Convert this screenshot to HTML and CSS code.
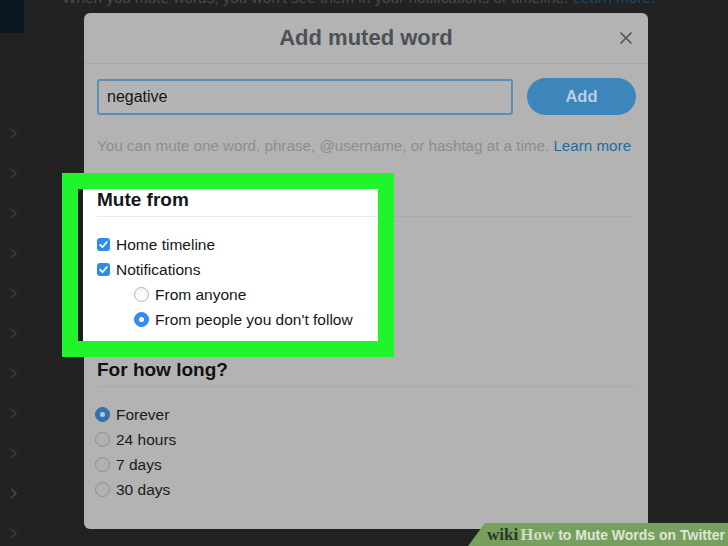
FILE: index.html
```html
<!DOCTYPE html>
<html>
<head>
<meta charset="utf-8">
<link rel="stylesheet" href="styles.css">
</head>
<body>
<div class="page">
  <aside class="sidebar">
    <div class="brand"></div>
    <ul class="nav">
      <li><svg class="chev" width="7" height="11" viewBox="0 0 7 11"><polyline points="1,1 6,5.5 1,10"/></svg></li>
      <li><svg class="chev" width="7" height="11" viewBox="0 0 7 11"><polyline points="1,1 6,5.5 1,10"/></svg></li>
      <li><svg class="chev" width="7" height="11" viewBox="0 0 7 11"><polyline points="1,1 6,5.5 1,10"/></svg></li>
      <li><svg class="chev" width="7" height="11" viewBox="0 0 7 11"><polyline points="1,1 6,5.5 1,10"/></svg></li>
      <li><svg class="chev" width="7" height="11" viewBox="0 0 7 11"><polyline points="1,1 6,5.5 1,10"/></svg></li>
      <li><svg class="chev" width="7" height="11" viewBox="0 0 7 11"><polyline points="1,1 6,5.5 1,10"/></svg></li>
      <li><svg class="chev" width="7" height="11" viewBox="0 0 7 11"><polyline points="1,1 6,5.5 1,10"/></svg></li>
      <li><svg class="chev" width="7" height="11" viewBox="0 0 7 11"><polyline points="1,1 6,5.5 1,10"/></svg></li>
      <li><svg class="chev" width="7" height="11" viewBox="0 0 7 11"><polyline points="1,1 6,5.5 1,10"/></svg></li>
      <li class="hl"><svg class="chev" width="7" height="11" viewBox="0 0 7 11"><polyline points="1,1 6,5.5 1,10"/></svg></li>
      <li><svg class="chev" width="7" height="11" viewBox="0 0 7 11"><polyline points="1,1 6,5.5 1,10"/></svg></li>
    </ul>
  </aside>
  <main class="main">
    <p class="intro">When you mute words, you won't see them in your notifications or timeline. <span class="intro-link">Learn more.</span></p>
  </main>
</div>

<div class="modal">
  <header class="modal-head">
    <span></span>
    <h2 class="modal-title">Add muted word</h2>
    <svg class="close" width="14" height="14" viewBox="0 0 14 14"><path d="M1.5 1.5 L12.5 12.5 M12.5 1.5 L1.5 12.5"/></svg>
  </header>
  <div class="modal-body">
    <div class="entry">
      <div class="field">negative</div>
      <button class="add">Add</button>
    </div>
    <p class="help">You can mute one word, phrase, @username, or hashtag at a time. <span class="link">Learn more</span></p>

    <section class="mute">
      <h3 class="sec-title light">Mute from</h3>
      <ul class="opts">
        <li class="opt"><span class="check"><svg width="13" height="13" viewBox="0 0 13 13"><polyline points="3.2,6.8 5.5,9.2 9.8,4"/></svg></span>Home timeline</li>
        <li class="opt"><span class="check"><svg width="13" height="13" viewBox="0 0 13 13"><polyline points="3.2,6.8 5.5,9.2 9.8,4"/></svg></span>Notifications</li>
        <li class="opt sub"><span class="radio"></span>From anyone</li>
        <li class="opt sub"><span class="radio on"></span>From people you don't follow</li>
      </ul>
    </section>

    <section class="howlong">
      <h3 class="sec-title">For how long?</h3>
      <ul class="opts dim">
        <li class="opt"><span class="radio on"></span>Forever</li>
        <li class="opt"><span class="radio"></span>24 hours</li>
        <li class="opt"><span class="radio"></span>7 days</li>
        <li class="opt"><span class="radio"></span>30 days</li>
      </ul>
    </section>
  </div>
</div>

<div class="watermark"><span class="wm-wiki">wiki</span><span class="wm-how">How</span><span class="wm-text">to Mute Words on Twitter</span></div>
</body>
</html>
```
FILE: styles.css
```css
* { box-sizing: border-box; }
html, body { margin: 0; padding: 0; }
body {
  width: 728px;
  height: 546px;
  overflow: hidden;
  background: #222222;
  font-family: "Liberation Sans", Arial, sans-serif;
  position: relative;
}
ul { list-style: none; margin: 0; padding: 0; }
h2, h3, p { margin: 0; }

.page { display: flex; height: 546px; }
.sidebar { width: 34px; display: flex; flex-direction: column; }
.brand { width: 24px; height: 33px; background: #0a1723; flex: none; }
.nav { margin-top: 80px; }
.nav li { height: 40px; display: flex; align-items: center; padding-left: 10px; }
.chev polyline { fill: none; stroke: #3b3b3b; stroke-width: 1.6; }
.nav li.hl .chev polyline { stroke: #4a4a4a; }

.main { flex: 1; padding-left: 28px; }
.intro {
  margin-top: -11px;
  font-size: 15.3px;
  line-height: 18px;
  color: #4a4a4a;
  white-space: nowrap;
}
.intro-link { color: #1c4566; }

.modal {
  position: absolute;
  left: 84px;
  top: 13px;
  width: 564px;
  height: 516px;
  background: #b3b3b3;
  border-radius: 6px;
}
.modal-head {
  height: 51px;
  border-bottom: 1px solid #a6a8aa;
  display: grid;
  grid-template-columns: 1fr auto 1fr;
  align-items: center;
}
.modal-title {
  font-size: 22px;
  font-weight: bold;
  color: #4b5157;
  line-height: 26px;
}
.close { justify-self: end; margin-right: 15px; }
.close path { stroke: #4e5459; stroke-width: 1.6; fill: none; }

.modal-body { padding: 14px 12px 0 13px; }
.entry { display: flex; align-items: center; gap: 14px; }
.field {
  flex: 1;
  height: 36px;
  border: 2px solid #5c8db3;
  border-radius: 3px;
  background: #b4b4b4;
  font-size: 16px;
  line-height: 32px;
  padding-left: 8px;
  color: #161616;
}
.add {
  width: 109px;
  height: 37px;
  border: none;
  border-radius: 19px;
  background: #3c86bc;
  color: #b9cfe0;
  font-family: "Liberation Sans", Arial, sans-serif;
  font-size: 16.5px;
  font-weight: bold;
  padding: 0;
}
.help {
  margin-top: 22px;
  font-size: 15.2px;
  line-height: 18px;
  color: #8a8e92;
  white-space: nowrap;
}
.link { color: #236ca2; }

.sec-title {
  font-size: 19px;
  font-weight: bold;
  line-height: 22px;
  padding-bottom: 5px;
  color: #111111;
  border-bottom: 1px solid #a8aaac;
}
.sec-title.light { border-bottom-color: #e6ebef; color: #14171a; }

.mute {
  position: relative;
  margin-top: 34px;
  margin-left: -19px;
  width: 300px;
  background: #ffffff;
  border-left: 5px solid #1c1c1c;
  padding: 0 0 9px 14px;
  box-shadow: 0 0 0 16px #20f52c;
}
.mute::after {
  content: "";
  position: absolute;
  left: calc(100% + 16px);
  top: 27px;
  width: 241px;
  height: 1px;
  background: #a8aaac;
}
.opts { margin-top: 15px; }
.opt {
  height: 25px;
  display: flex;
  align-items: center;
  gap: 6px;
  font-size: 15.5px;
  color: #14171a;
}
.opt.sub { padding-left: 37px; }

.check {
  width: 13px;
  height: 13px;
  border-radius: 3px;
  background: #2d8cf0;
  display: flex;
}
.check polyline { fill: none; stroke: #ffffff; stroke-width: 1.8; stroke-linecap: round; stroke-linejoin: round; }

.radio {
  width: 15px;
  height: 15px;
  border-radius: 50%;
  border: 1px solid #b3b3b3;
  background: linear-gradient(#f4f4f4, #ffffff);
  display: flex;
  align-items: center;
  justify-content: center;
  flex: none;
}
.radio.on { background: #2f8ef0; border-color: #2a82de; }
.radio.on::after {
  content: "";
  width: 5px;
  height: 5px;
  border-radius: 50%;
  background: #ffffff;
}

.howlong { margin-top: 18px; }
.opts.dim .opt { color: #1a1a1a; }
.opts.dim .opt .radio { margin-left: -2px; background: #b1b1b1; border-color: #8f8f8f; }
.opts.dim .opt .radio.on { background: #3473b1; border-color: #2f68a0; }
.opts.dim .opt .radio.on::after { background: #b7c6d4; }

.watermark {
  position: absolute;
  right: 0;
  bottom: 0;
  width: 260px;
  height: 23px;
  background: #77a05f;
  clip-path: polygon(17px 0, 100% 0, 100% 100%, 0 100%);
  display: flex;
  align-items: center;
  padding-left: 19px;
  white-space: nowrap;
}
.wm-wiki, .wm-how {
  font-family: "Liberation Serif", "Times New Roman", serif;
  font-weight: bold;
  font-size: 17px;
}
.wm-wiki { color: #2c3527; }
.wm-how { color: #cfdcc7; margin-left: 2px; }
.wm-text {
  font-weight: bold;
  font-size: 14px;
  color: #dde6d8;
  margin-left: 4px;
}
```
